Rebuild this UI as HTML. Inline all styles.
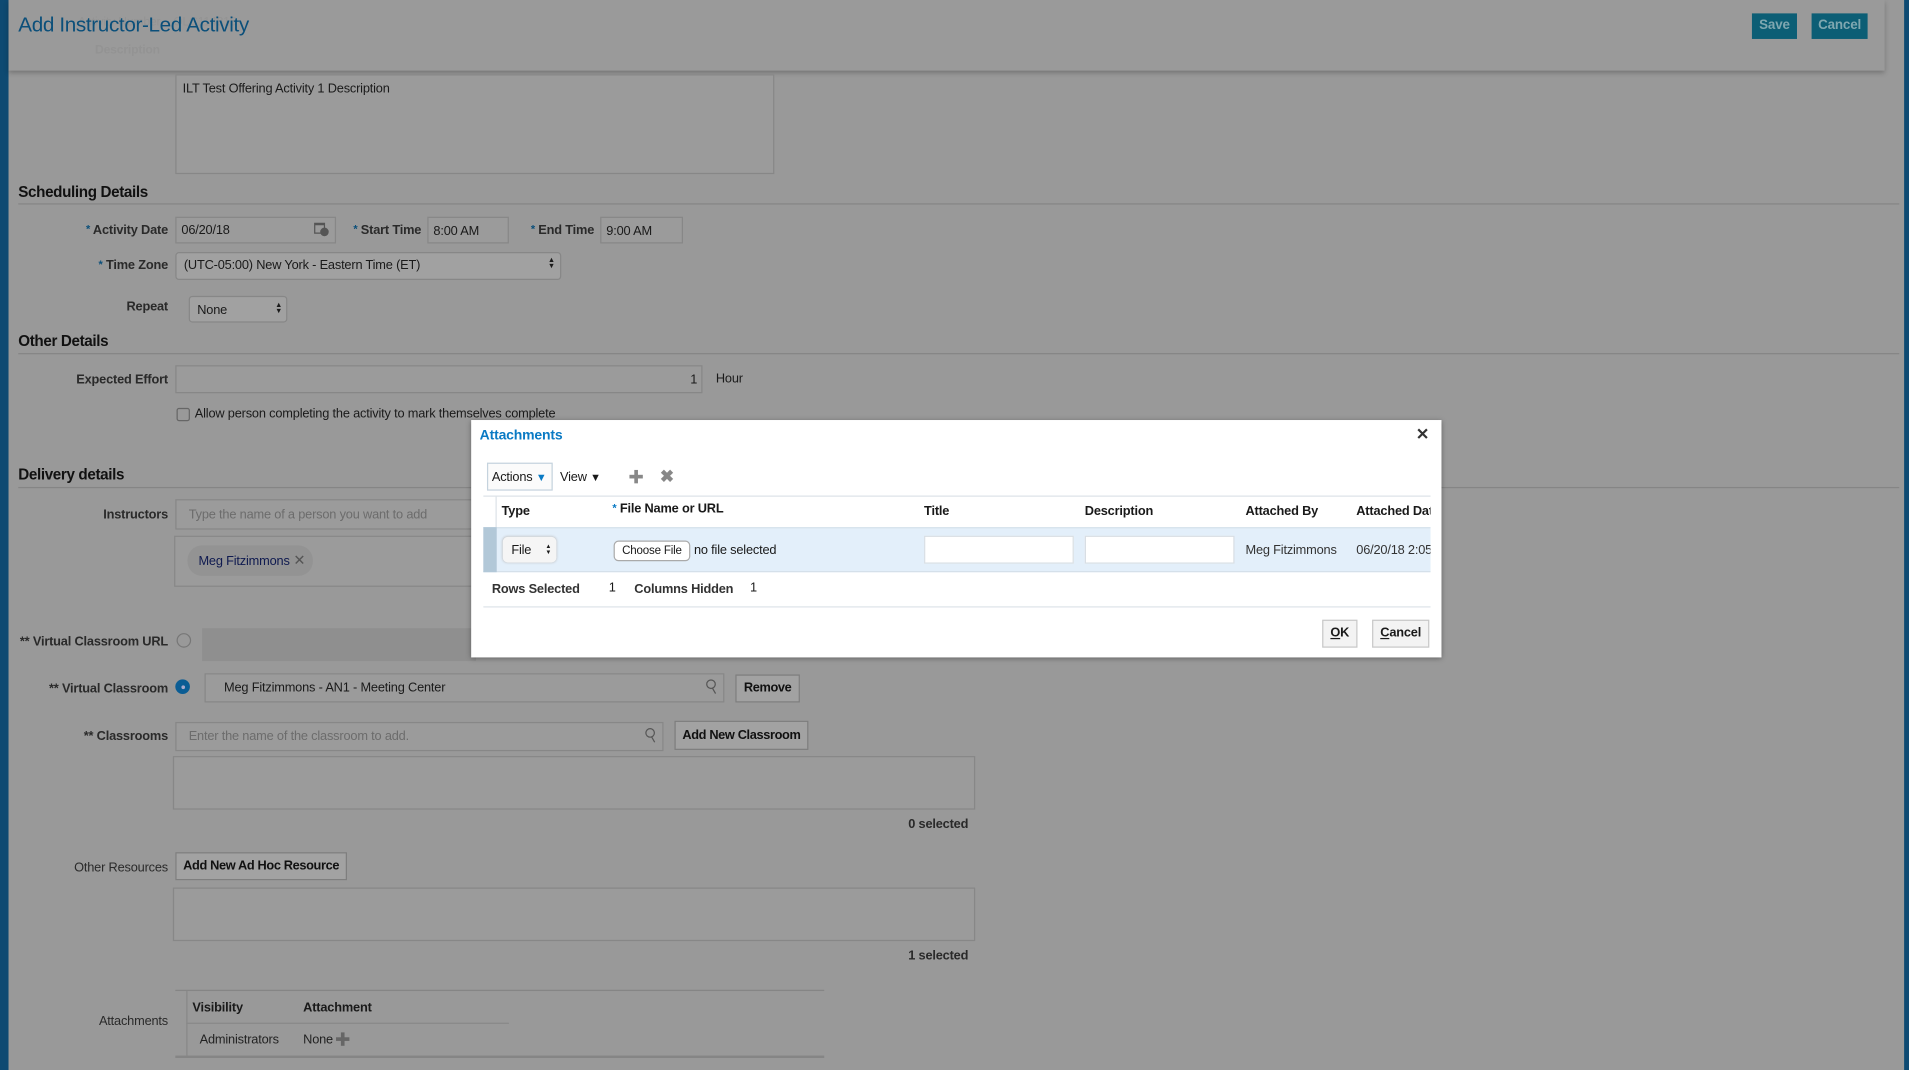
<!DOCTYPE html>
<html><head><meta charset="utf-8"><style>
html,body{margin:0;padding:0;width:1909px;height:1070px;overflow:hidden;background:#999;}
#w{position:absolute;left:0;top:0;width:1568px;height:879px;transform:scale(1.21747);transform-origin:0 0;background:#999;font-family:"Liberation Sans",Arial,sans-serif;font-size:10.5px;color:#1a1a1a;white-space:nowrap;letter-spacing:-0.15px;}
.a{position:absolute;}
.lbl{position:absolute;font-weight:bold;color:#2a2a2a;font-size:10.5px;text-align:right;}
.st{color:#0b4f7a;font-size:9px;vertical-align:top;}
.h{position:absolute;left:15px;font-weight:bold;font-size:12.5px;color:#111;letter-spacing:-0.3px;}
.hr{position:absolute;left:15px;right:8px;height:1px;background:#858585;}
.in{position:absolute;border:1px solid #878787;background:#9b9b9b;box-sizing:border-box;}
.btn{position:absolute;border:1px solid #7e7e7e;background:#a2a2a2;box-sizing:border-box;font-weight:bold;font-size:10.5px;color:#111;text-align:center;letter-spacing:-0.3px;}
.ph{color:#6c6c6c;}
.d{position:absolute;font-size:10.5px;}
</style></head><body><div id="w">
<div class="a" style="left:0;top:0;width:7px;height:879px;background:#0e4a72"></div>
<div class="a" style="left:1564px;top:0;width:4px;height:879px;background:#0e4a72"></div>
<div class="a" style="left:7px;top:0;width:1541px;height:58px;background:#9a9a9a;box-shadow:0 2px 4px rgba(0,0,0,.25)"></div>
<div class="a" style="left:64px;top:13px;font-size:10px;color:#939393">Activity Number &nbsp;&nbsp; OLC114815</div>
<div class="a" style="left:78px;top:36px;font-size:10px;color:#939393;font-weight:bold">Description</div>
<div class="a" style="left:15px;top:11px;font-size:17px;color:#0b4f7a;letter-spacing:-0.3px">Add Instructor-Led Activity</div>
<div class="a" style="left:1439px;top:11px;width:37px;height:21px;background:#0c5e75;color:#7fa7b0;font-weight:bold;font-size:11px;text-align:center;line-height:21px">Save</div>
<div class="a" style="left:1488px;top:11px;width:46px;height:21px;background:#0c5e75;color:#7fa7b0;font-weight:bold;font-size:11px;text-align:center;line-height:21px">Cancel</div>

<div class="in" style="left:144px;top:61px;width:492px;height:82px"></div>
<div class="d" style="left:150px;top:67px">ILT Test Offering Activity 1 Description</div>

<div class="h" style="top:151px">Scheduling Details</div><div class="hr" style="top:167px"></div>
<div class="lbl" style="left:30px;width:108px;top:183px"><span class="st">*</span> Activity Date</div>
<div class="in" style="left:144px;top:178px;width:132px;height:22px"></div><div class="d" style="left:149px;top:183px">06/20/18</div>
<div class="a" style="left:258px;top:183px;width:9px;height:9px;border:1px solid #555;border-top-width:2px;box-sizing:border-box"></div><div class="a" style="left:263px;top:187px;width:7px;height:7px;border-radius:50%;background:#555"></div>
<div class="lbl" style="left:280px;width:66px;top:183px"><span class="st">*</span> Start Time</div>
<div class="in" style="left:351px;top:178px;width:67px;height:22px"></div><div class="d" style="left:356px;top:184px">8:00 AM</div>
<div class="lbl" style="left:420px;width:68px;top:183px"><span class="st">*</span> End Time</div>
<div class="in" style="left:493px;top:178px;width:68px;height:22px"></div><div class="d" style="left:498px;top:184px">9:00 AM</div>
<div class="lbl" style="left:30px;width:108px;top:212px"><span class="st">*</span> Time Zone</div>
<div class="in" style="left:144px;top:207px;width:317px;height:23px;background:#a1a1a1;border-radius:3px"></div><div class="d" style="left:151px;top:212px">(UTC-05:00) New York - Eastern Time (ET)</div><div class="d" style="left:450px;top:212px;font-size:6px;line-height:5px">&#9650;<br>&#9660;</div>
<div class="lbl" style="left:30px;width:108px;top:246px">Repeat</div>
<div class="in" style="left:155px;top:243px;width:81px;height:22px;background:#a1a1a1;border-radius:3px"></div><div class="d" style="left:162px;top:249px">None</div><div class="d" style="left:226px;top:249px;font-size:6px;line-height:5px">&#9650;<br>&#9660;</div>

<div class="h" style="top:273px">Other Details</div><div class="hr" style="top:290px"></div>
<div class="lbl" style="left:30px;width:108px;top:306px">Expected Effort</div>
<div class="in" style="left:144px;top:300px;width:433px;height:23px"></div><div class="d" style="left:567px;top:306px">1</div>
<div class="d" style="left:588px;top:305px">Hour</div>
<div class="a" style="left:145px;top:335px;width:9px;height:9px;border:1px solid #666;border-radius:2px"></div>
<div class="d" style="left:160px;top:334px">Allow person completing the activity to mark themselves complete</div>

<div class="h" style="top:383px">Delivery details</div><div class="hr" style="top:400px"></div>
<div class="lbl" style="left:30px;width:108px;top:417px">Instructors</div>
<div class="in" style="left:144px;top:410px;width:260px;height:25px"></div><div class="d ph" style="left:155px;top:417px">Type the name of a person you want to add</div>
<div class="in" style="left:143px;top:440px;width:260px;height:42px"></div>
<div class="a" style="left:154px;top:448px;width:103px;height:25px;border-radius:12px;background:#939393"></div>
<div class="d" style="left:163px;top:455px;color:#0f1a50">Meg Fitzimmons</div><div class="d" style="left:241px;top:453px;color:#555;font-size:12px">&#10005;</div>

<div class="lbl" style="left:0px;width:138px;top:521px">** Virtual Classroom URL</div>
<div class="a" style="left:145px;top:520px;width:10px;height:10px;border:1px solid #777;border-radius:50%"></div>
<div class="a" style="left:166px;top:516px;width:225px;height:27px;background:#8f8f8f"></div>
<div class="lbl" style="left:10px;width:128px;top:560px">** Virtual Classroom</div>
<div class="a" style="left:144px;top:558px;width:12px;height:12px;border-radius:50%;background:#0b5d94"></div><div class="a" style="left:149px;top:563px;width:3px;height:3px;border-radius:50%;background:#aac"></div>
<div class="in" style="left:168px;top:553px;width:427px;height:24px"></div><div class="d" style="left:184px;top:559px">Meg Fitzimmons - AN1 - Meeting Center</div>
<div class="a" style="left:580px;top:558px;width:6px;height:6px;border:1px solid #555;border-radius:50%"></div><div class="a" style="left:586px;top:565px;width:1px;height:5px;background:#555;transform:rotate(-30deg)"></div>
<div class="btn" style="left:604px;top:554px;width:53px;height:23px;line-height:21px">Remove</div>
<div class="lbl" style="left:10px;width:128px;top:599px">** Classrooms</div>
<div class="in" style="left:144px;top:593px;width:401px;height:24px"></div><div class="d ph" style="left:155px;top:599px">Enter the name of the classroom to add.</div>
<div class="a" style="left:530px;top:598px;width:6px;height:6px;border:1px solid #555;border-radius:50%"></div><div class="a" style="left:536px;top:605px;width:1px;height:5px;background:#555;transform:rotate(-30deg)"></div>
<div class="btn" style="left:554px;top:592px;width:110px;height:24px;line-height:22px">Add New Classroom</div>
<div class="in" style="left:142px;top:621px;width:659px;height:44px"></div>
<div class="d" style="left:746px;top:671px;font-weight:bold;color:#2a2a2a">0 selected</div>
<div class="lbl" style="left:10px;width:128px;top:707px;font-weight:normal;color:#2a2a2a">Other Resources</div>
<div class="btn" style="left:144px;top:700px;width:141px;height:23px;line-height:21px">Add New Ad Hoc Resource</div>
<div class="in" style="left:142px;top:729px;width:659px;height:44px"></div>
<div class="d" style="left:746px;top:779px;font-weight:bold;color:#2a2a2a">1 selected</div>
<div class="a" style="left:144px;top:813px;width:533px;height:1px;background:#858585"></div>
<div class="a" style="left:144px;top:867px;width:533px;height:2px;background:#858585"></div>
<div class="a" style="left:153px;top:814px;width:1px;height:53px;background:#888"></div>
<div class="a" style="left:153px;top:840px;width:265px;height:1px;background:#888"></div>
<div class="lbl" style="left:10px;width:128px;top:833px;font-weight:normal">Attachments</div>
<div class="d" style="left:158px;top:822px;font-weight:bold">Visibility</div>
<div class="d" style="left:249px;top:822px;font-weight:bold">Attachment</div>
<div class="d" style="left:164px;top:848px;color:#222">Administrators</div>
<div class="d" style="left:249px;top:848px;color:#222">None</div>
<div class="a" style="left:276px;top:852px;width:11px;height:3px;background:#666"></div><div class="a" style="left:280px;top:848px;width:3px;height:11px;background:#666"></div>

<!-- dialog -->
<div class="a" style="left:387px;top:345px;width:797px;height:195px;background:#fff;box-shadow:0 1px 4px rgba(0,0,0,.35)">
 <div class="d" style="left:7px;top:7px;font-size:11.5px;font-weight:bold;color:#0a7ac4">Attachments</div>
 <div class="d" style="left:776px;top:4px;font-size:13px;font-weight:bold;color:#333">&#10005;</div>
 <div class="a" style="left:13px;top:35px;width:54px;height:23px;border:1px solid #c5d3de;box-sizing:border-box;background:#fbfbfb"></div>
 <div class="d" style="left:17px;top:41px">Actions <span style="color:#0a7ac4;font-size:9px">&#9660;</span></div>
 <div class="d" style="left:73px;top:41px">View <span style="font-size:9px">&#9660;</span></div>
 <div class="a" style="left:130px;top:45px;width:11px;height:3px;background:#888"></div><div class="a" style="left:134px;top:41px;width:3px;height:11px;background:#888"></div>
 <div class="d" style="left:155px;top:38px;font-size:14px;font-weight:bold;color:#888">&#10006;</div>
 <div class="a" style="left:10px;top:62px;width:778px;height:1px;background:#dde3e8"></div>
 <div class="a" style="left:20px;top:62px;width:1px;height:26px;background:#dde3e8"></div>
 <div class="d" style="left:25px;top:69px;font-weight:bold">Type</div>
 <div class="d" style="left:116px;top:67px;font-weight:bold"><span style="color:#0a7ac4;font-size:9px;vertical-align:top">*</span> File Name or URL</div>
 <div class="d" style="left:372px;top:69px;font-weight:bold">Title</div>
 <div class="d" style="left:504px;top:69px;font-weight:bold">Description</div>
 <div class="d" style="left:636px;top:69px;font-weight:bold">Attached By</div>
 <div class="d" style="left:727px;top:69px;font-weight:bold;width:61px;overflow:hidden">Attached Date</div>
 <div class="a" style="left:10px;top:88px;width:778px;height:37px;background:#e3effa;border-top:1px solid #d5e0ea;border-bottom:1px solid #d5e0ea;box-sizing:border-box"></div>
 <div class="a" style="left:10px;top:88px;width:11px;height:37px;background:#b2c8d8"></div>
 <div class="a" style="left:26px;top:96px;width:44px;height:21px;border-radius:4px;background:#f5f5f5;box-shadow:0 0 2px #bbb"></div>
 <div class="d" style="left:33px;top:101px">File</div><div class="d" style="left:61px;top:102px;font-size:5px;line-height:5px">&#9650;<br>&#9660;</div>
 <div class="a" style="left:117px;top:99px;width:61px;height:15px;border:1px solid #aaa;border-radius:4px;background:#fff;font-size:9.5px;text-align:center;line-height:15px">Choose File</div>
 <div class="d" style="left:183px;top:101px">no file selected</div>
 <div class="a" style="left:372px;top:95px;width:123px;height:23px;background:#fff;border:1px solid #d8dee4;box-sizing:border-box"></div>
 <div class="a" style="left:504px;top:95px;width:123px;height:23px;background:#fff;border:1px solid #d8dee4;box-sizing:border-box"></div>
 <div class="d" style="left:636px;top:101px;color:#333">Meg Fitzimmons</div>
 <div class="d" style="left:727px;top:101px;color:#333;width:61px;overflow:hidden">06/20/18 2:05 PM</div>
 <div class="d" style="left:17px;top:133px;font-weight:bold;color:#333">Rows Selected</div><div class="d" style="left:113px;top:132px">1</div>
 <div class="d" style="left:134px;top:133px;font-weight:bold;color:#333">Columns Hidden</div><div class="d" style="left:229px;top:132px">1</div>
 <div class="a" style="left:10px;top:153px;width:778px;height:1px;background:#dde3e8"></div>
 <div class="a" style="left:699px;top:164px;width:29px;height:23px;border:1px solid #c8c8c8;background:#f3f3f3;box-sizing:border-box;font-weight:bold;text-align:center;line-height:21px"><u>O</u>K</div>
 <div class="a" style="left:740px;top:164px;width:47px;height:23px;border:1px solid #c8c8c8;background:#f3f3f3;box-sizing:border-box;font-weight:bold;text-align:center;line-height:21px"><u>C</u>ancel</div>
</div>
</div></body></html>
